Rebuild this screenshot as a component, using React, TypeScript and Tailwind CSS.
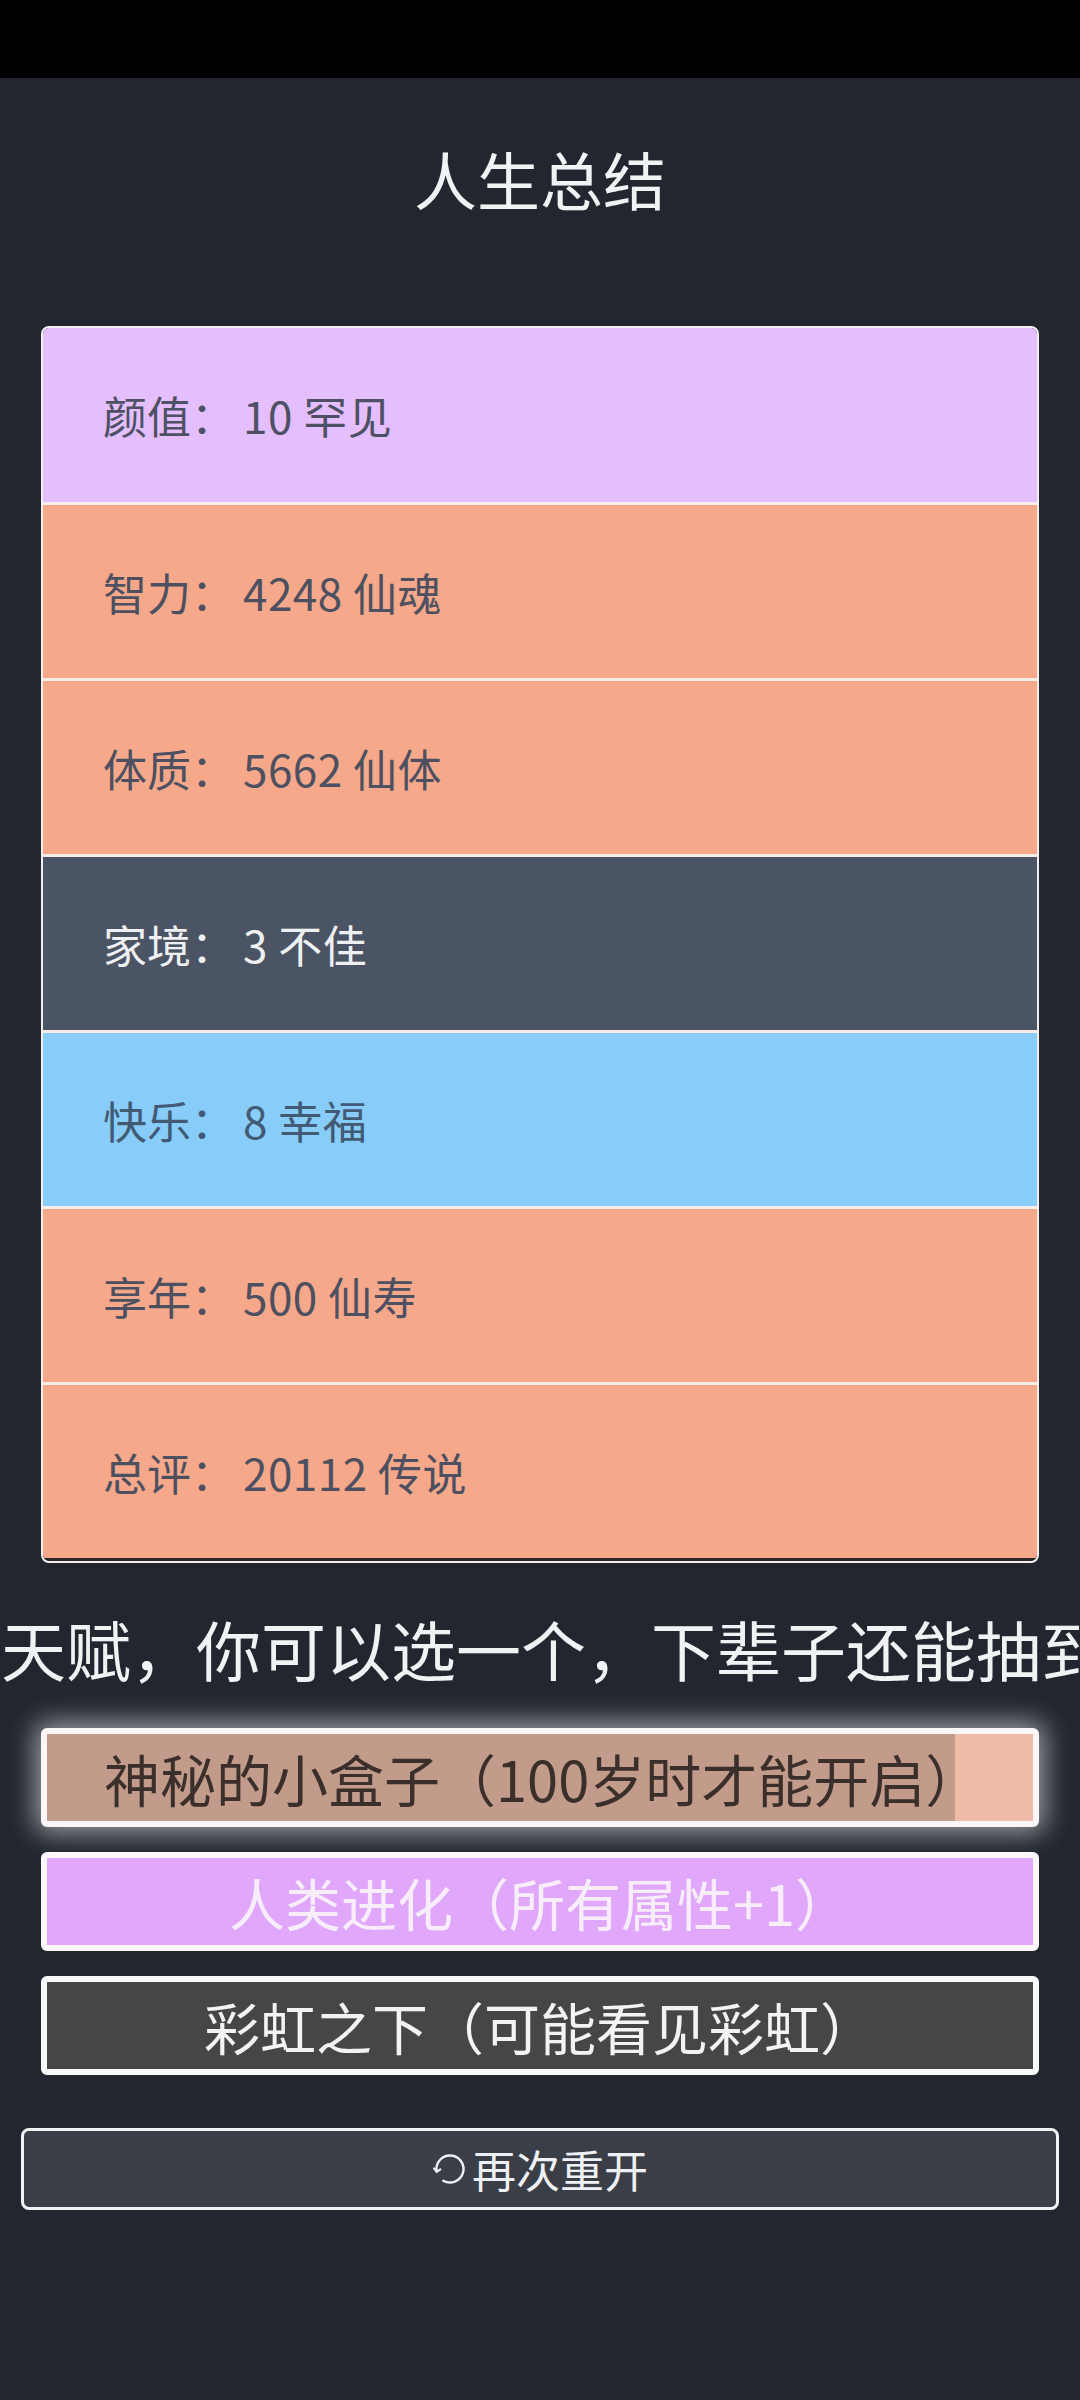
import React from "react";

const FONT = { fontFamily: '"Noto Sans CJK SC", "Noto Sans", sans-serif' };

type Row = { label: string; value: string; bg: string; text: string };

const rows: Row[] = [
  { label: "颜值", value: "10 罕见", bg: "bg-[#e5befd]", text: "text-[#4d5163]" },
  { label: "智力", value: "4248 仙魂", bg: "bg-[#f6a88a]", text: "text-[#4d5060]" },
  { label: "体质", value: "5662 仙体", bg: "bg-[#f6a88a]", text: "text-[#4d5060]" },
  { label: "家境", value: "3 不佳", bg: "bg-[#4b5464]", text: "text-[#eef0f2]" },
  { label: "快乐", value: "8 幸福", bg: "bg-[#88cdf9]", text: "text-[#425a73]" },
  { label: "享年", value: "500 仙寿", bg: "bg-[#f6a88a]", text: "text-[#4d5060]" },
  { label: "总评", value: "20112 传说", bg: "bg-[#f6a88a]", text: "text-[#4d5060]" },
];

function RestartIcon() {
  return (
    <svg width="36" height="36" viewBox="0 0 24 24" fill="none" className="mr-[4px]">
      <path
        d="M3.14 13.56 A9 9 0 1 1 7.5 19.79"
        stroke="#eef0f3"
        strokeWidth="1.6"
        strokeLinecap="round"
      />
      <path
        d="M1.4 11.6 L3.14 14 L5.6 12.2"
        stroke="#eef0f3"
        strokeWidth="1.4"
        strokeLinecap="round"
        strokeLinejoin="round"
      />
    </svg>
  );
}

export default function App() {
  return (
    <div className="w-[1080px] h-[2400px] bg-[#22272f] overflow-hidden" style={FONT}>
      {/* status bar */}
      <div className="h-[78px] bg-black" />

      <h1 className="mt-[62px] text-center text-[63px] leading-[76px] text-[#f1f2f4] font-normal">
        人生总结
      </h1>

      {/* summary card */}
      <div className="mt-[110px] mx-[41px] border-2 border-[#f3eef0] rounded-lg overflow-hidden bg-[#2b2623]">
        {rows.map((r, i) => (
          <div
            key={r.label}
            className={`${r.bg} ${r.text} ${
              i === 0 ? "h-[174px]" : "h-[176px] border-t-[3px] border-[#f7ece8]"
            } flex items-center pl-[60px] text-[44px]`}
          >
            {r.label}：<span className="ml-[8px] tracking-[0.5px]">{r.value}</span>
          </div>
        ))}
        <div className="h-[3px]" />
      </div>

      <div className="mt-[46px] whitespace-nowrap overflow-hidden pl-[1px] text-[65px] leading-[78px] text-[#f1f2f4]">
        天赋，你可以选一个，下辈子还能抽到哦
      </div>

      {/* talents */}
      <div className="mt-[41px] mx-[41px] flex flex-col gap-[25px]">
        <div className="h-[99px] border-[6px] border-[#fbf7f8] rounded-md overflow-hidden flex bg-[#f0bca8] shadow-[0_0_26px_6px_rgba(255,255,255,0.55)]">
          <div className="w-[908px] shrink-0 h-full bg-[#c39b8b] flex items-center text-[56px] text-[#3a2f2b] pl-[57px] whitespace-nowrap overflow-visible">
            神秘的小盒子（100岁时才能开启）
          </div>
        </div>
        <div className="h-[99px] border-[6px] border-[#fbf7fb] rounded-md bg-[#e1a7fb] flex items-center justify-center text-[56px] text-[#f7eefa]">
          人类进化（所有属性+1）
        </div>
        <div className="h-[99px] border-[6px] border-[#f8fafa] rounded-md bg-[#464646] flex items-center justify-center text-[56px] text-[#f3f3f3]">
          彩虹之下（可能看见彩虹）
        </div>
      </div>

      <div className="mt-[53px] mx-[21px] h-[82px] border-[3px] border-[#f1f2f4] rounded-lg bg-[#3a3e47] flex items-center justify-center text-[44px] text-[#eef0f3]">
        <RestartIcon />
        再次重开
      </div>
    </div>
  );
}
